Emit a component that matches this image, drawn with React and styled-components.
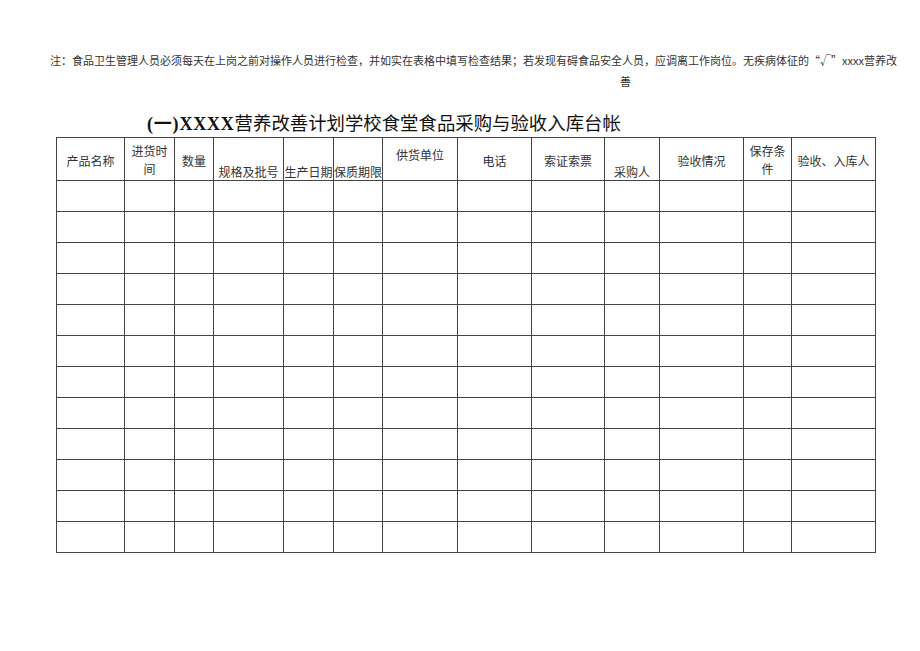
import React from 'react';
import styled, { createGlobalStyle } from 'styled-components';

const GlobalStyle = createGlobalStyle`
  html, body {
    margin: 0;
    padding: 0;
    background: #fff;
  }
`;

const Page = styled.div`
  width: 920px;
  height: 651px;
  box-sizing: border-box;
  padding-top: 50px;
  font-family: "Noto Sans CJK SC", "Liberation Serif", sans-serif;
  color: #222;
`;

const NoteLine = styled.div`
  box-sizing: border-box;
  width: 886px;
  height: 21px;
  padding-left: ${props => props.indent || 50}px;
  font-size: 11px;
  line-height: 21px;
  color: #333;
  white-space: nowrap;
  text-align: ${props => props.justify ? 'justify' : 'left'};
  text-align-last: ${props => props.justify ? 'justify' : 'auto'};
`;

const Title = styled.h1`
  height: 26px;
  margin: 17px 0 2px 147px;
  font-size: 18.4px;
  line-height: 26px;
  font-weight: normal;
  color: #111;
  white-space: nowrap;
`;

const TitlePrefix = styled.span`
  font-family: "Liberation Serif", "Noto Sans CJK SC", serif;
  font-weight: bold;
  font-size: 18px;
  letter-spacing: 0.8px;
`;

const TableWrap = styled.div`
  padding-left: 56px;
`;

const Table = styled.table`
  border-collapse: collapse;
  table-layout: fixed;
  width: 819px;
  border: 1px solid #333;
`;

const HeadRow = styled.tr`
  height: 43px;
`;

const BodyRow = styled.tr`
  height: 31px;
`;

const HeadCell = styled.th`
  padding: ${props => props.valign === 'bottom' ? '0 0 1px' : props.valign === 'top' ? '9px 0 0' : props.lines > 1 ? '2px 0 0' : '3px 0 0'};
  border: 1px solid #444;
  font-size: 12px;
  line-height: ${props => props.lines > 1 ? 18 : 15}px;
  font-weight: normal;
  color: #333;
  text-align: center;
  vertical-align: ${props => props.valign || 'middle'};
  white-space: nowrap;
  overflow: hidden;
`;

const Cell = styled.td`
  padding: 0;
  border: 1px solid #444;
`;

const columns = [
  { w: 68, label: ['产品名称'] },
  { w: 50, label: ['进货时', '间'] },
  { w: 39, label: ['数量'] },
  { w: 70, label: ['规格及批号'], valign: 'bottom' },
  { w: 50, label: ['生产日期'], valign: 'bottom' },
  { w: 49, label: ['保质期限'], valign: 'bottom' },
  { w: 75, label: ['供货单位'], valign: 'top' },
  { w: 74, label: ['电话'] },
  { w: 73, label: ['索证索票'] },
  { w: 55, label: ['采购人'], valign: 'bottom' },
  { w: 84, label: ['验收情况'] },
  { w: 48, label: ['保存条', '件'] },
  { w: 84, label: ['验收、入库人'] },
];

const rows = Array.from({ length: 12 }, (_, i) => i);

export default function App() {
  return (
    <>
      <GlobalStyle />
      <Page>
        <NoteLine justify>
          注：食品卫生管理人员必须每天在上岗之前对操作人员进行检查，并如实在表格中填写检查结果；若发现有碍食品安全人员，应调离工作岗位。无疾病体征的“√”xxxx营养改
        </NoteLine>
        <NoteLine indent={620}>善</NoteLine>
        <Title>
          <TitlePrefix>(一)XXXX</TitlePrefix>营养改善计划学校食堂食品采购与验收入库台帐
        </Title>
        <TableWrap>
          <Table>
            <colgroup>
              {columns.map((c, i) => (
                <col key={i} style={{ width: c.w }} />
              ))}
            </colgroup>
            <thead>
              <HeadRow>
                {columns.map((c, i) => (
                  <HeadCell key={i} valign={c.valign} lines={c.label.length}>
                    {c.label.map((line, j) => (
                      <React.Fragment key={j}>
                        {j > 0 && <br />}
                        {line}
                      </React.Fragment>
                    ))}
                  </HeadCell>
                ))}
              </HeadRow>
            </thead>
            <tbody>
              {rows.map(r => (
                <BodyRow key={r}>
                  {columns.map((c, i) => (
                    <Cell key={i} />
                  ))}
                </BodyRow>
              ))}
            </tbody>
          </Table>
        </TableWrap>
      </Page>
    </>
  );
}
